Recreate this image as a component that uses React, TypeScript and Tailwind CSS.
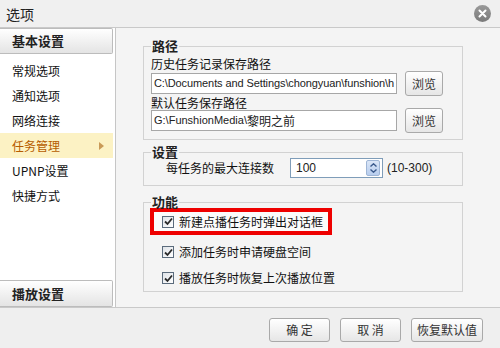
import React from "react";

const cjk = '"Noto Sans CJK SC", "Noto Sans", sans-serif';
const latin = '"Liberation Sans", "Noto Sans CJK SC", sans-serif';

function Check() {
  return (
    <span className="w-[12px] h-[12px] border border-[#5b6b7c] bg-gradient-to-br from-[#dfe3e8] to-white flex items-center justify-center shrink-0">
      <svg width="9" height="9" viewBox="0 0 9 9">
        <path d="M1 4.5 L3.5 7 L8 1.5" stroke="#2a2a2a" strokeWidth="1.8" fill="none" />
      </svg>
    </span>
  );
}

function Btn({ children, w }: { children: React.ReactNode; w: string }) {
  return (
    <div
      className={`${w} h-[24px] flex items-center justify-center border border-[#a9a9a9] rounded-[3px] bg-gradient-to-b from-white to-[#e6e6e6] text-[12px] text-[#333] shrink-0`}
    >
      {children}
    </div>
  );
}

export default function App() {
  return (
    <div
      className="w-[500px] h-[348px] flex flex-col bg-[#efefef] overflow-hidden text-[#111]"
      style={{ fontFamily: cjk }}
    >
      {/* title bar */}
      <div className="h-[28px] shrink-0 flex items-center justify-between pl-[6px] pr-[9px] border-b border-[#c9c9c9] bg-[#f0f0f0]">
        <span className="text-[14px] leading-[14px] text-[#222]">选项</span>
        <span className="w-[17px] h-[17px] rounded-full bg-gradient-to-b from-[#9a9a9a] to-[#7a7a7a] flex items-center justify-center">
          <svg width="9" height="9" viewBox="0 0 9 9">
            <path d="M1.5 1.5 L7.5 7.5 M7.5 1.5 L1.5 7.5" stroke="white" strokeWidth="2" strokeLinecap="round" />
          </svg>
        </span>
      </div>

      {/* body */}
      <div className="h-[279px] shrink-0 flex">
        {/* sidebar */}
        <div className="w-[116px] shrink-0 bg-white border-r border-[#c6c6c6] flex flex-col pr-[2px]">
          <div className="h-[26px] flex items-center pl-[12px] border border-[#bcbcbc] border-l-0 rounded-r-[2px] bg-gradient-to-b from-white to-[#e4e4e4] text-[13px] font-bold text-[#222]">
            基本设置
          </div>
          <div className="mt-[4px] flex flex-col text-[12px]">
            <div className="h-[25px] flex items-center pl-[12px]">常规选项</div>
            <div className="h-[25px] flex items-center pl-[12px]">通知选项</div>
            <div className="h-[25px] flex items-center pl-[12px]">网络连接</div>
            <div className="h-[25px] flex items-center justify-between pl-[12px] pr-[9px] bg-[#fcf2c4] text-[#b65c00]">
              <span>任务管理</span>
              <svg width="5" height="8" viewBox="0 0 5 8">
                <path d="M0 0 L5 4 L0 8 Z" fill="#c99a57" />
              </svg>
            </div>
            <div className="h-[25px] flex items-center pl-[12px]">UPNP设置</div>
            <div className="h-[25px] flex items-center pl-[12px]">快捷方式</div>
          </div>
          <div className="flex-1" />
          <div className="h-[27px] flex items-center pl-[12px] border border-[#bcbcbc] border-l-0 rounded-r-[2px] bg-gradient-to-b from-white to-[#e4e4e4] text-[13px] font-bold text-[#222]">
            播放设置
          </div>
        </div>

        {/* content */}
        <div className="flex-1 bg-[#f4f4f4] pl-[27px] pr-[37px] pt-[12px] border-r border-[#dcdcdc]">
          {/* 路径 */}
          <fieldset className="border border-[#d2d2d2] pl-[7px] pr-[19px] pb-[6px]">
            <legend className="px-[1px] text-[13px] leading-[12px] h-[12px] font-bold text-[#222]">路径</legend>
            <div className="mt-[6px] h-[12px] leading-[12px] text-[12px]">历史任务记录保存路径</div>
            <div className="mt-[1px] h-[25px] flex items-center gap-[8px]">
              <div
                className="w-[246px] h-[21px] border border-[#a7a7a7] bg-white flex items-center pl-[2px] overflow-hidden whitespace-nowrap text-[11px] tracking-[-0.1px] text-[#222]"
                style={{ fontFamily: latin }}
              >
                C:\Documents and Settings\chongyuan\funshion\h
              </div>
              <Btn w="w-[38px] h-[25px]">浏览</Btn>
            </div>
            <div className="mt-[1px] h-[12px] leading-[12px] text-[12px]">默认任务保存路径</div>
            <div className="-mt-[1px] h-[25px] flex items-center gap-[8px]">
              <div
                className="w-[246px] h-[21px] border border-[#a7a7a7] bg-white flex items-center pl-[2px] overflow-hidden whitespace-nowrap text-[11px] text-[#222]"
                style={{ fontFamily: latin }}
              >
                G:\FunshionMedia\<span className="text-[12px]" style={{ fontFamily: cjk }}>黎明之前</span>
              </div>
              <Btn w="w-[38px] h-[25px]">浏览</Btn>
            </div>
          </fieldset>

          {/* 设置 */}
          <fieldset className="mt-[6px] border border-[#d2d2d2] pl-[7px] pb-[7px]">
            <legend className="px-[1px] text-[13px] leading-[12px] h-[12px] font-bold text-[#222]">设置</legend>
            <div className="h-[20px] flex items-center text-[12px] pl-[15px]">
              <span className="w-[124px] shrink-0">每任务的最大连接数</span>
              <div className="w-[93px] h-[20px] shrink-0 border border-[#7f9db9] bg-white flex items-center justify-between pl-[5px] pr-[2px]">
                <span className="text-[12px] text-[#222]" style={{ fontFamily: latin }}>100</span>
                <div className="w-[14px] h-[16px] rounded-[2px] border border-[#9fb6d6] bg-gradient-to-b from-[#dbe6f7] to-[#b7cdee] flex flex-col items-center justify-center gap-[2px]">
                  <svg width="7" height="4" viewBox="0 0 7 4">
                    <path d="M0.5 3.5 L3.5 0.8 L6.5 3.5" stroke="#3a5a8c" strokeWidth="1.4" fill="none" />
                  </svg>
                  <svg width="7" height="4" viewBox="0 0 7 4">
                    <path d="M0.5 0.5 L3.5 3.2 L6.5 0.5" stroke="#3a5a8c" strokeWidth="1.4" fill="none" />
                  </svg>
                </div>
              </div>
              <span className="ml-[4px] text-[12px] text-[#222]" style={{ fontFamily: latin }}>(10-300)</span>
            </div>
          </fieldset>

          {/* 功能 */}
          <fieldset className="mt-[10px] border border-[#d2d2d2] pl-[6px]">
            <legend className="ml-[1px] px-[1px] text-[13px] leading-[12px] h-[12px] font-bold text-[#222]">功能</legend>
            <div className="w-[182px] h-[27px] border-[4px] border-[#ee0000] bg-[#fbfbfb] flex items-center gap-[5px] pl-[8px] text-[12px]">
              <Check />
              <span>新建点播任务时弹出对话框</span>
            </div>
            <div className="mt-[4px] h-[26px] flex items-center gap-[5px] pl-[12px] text-[12px]">
              <Check />
              <span>添加任务时申请硬盘空间</span>
            </div>
            <div className="h-[26px] flex items-center gap-[5px] pl-[12px] text-[12px]">
              <Check />
              <span>播放任务时恢复上次播放位置</span>
            </div>
          </fieldset>
        </div>
      </div>

      {/* footer */}
      <div className="flex-1 border-t border-[#c9c9c9] bg-[#efefef] flex items-start justify-end gap-[10px] pt-[10px] pr-[17px]">
        <Btn w="w-[61px]">确&nbsp;定</Btn>
        <Btn w="w-[61px]">取&nbsp;消</Btn>
        <Btn w="w-[72px]">恢复默认值</Btn>
      </div>
    </div>
  );
}
